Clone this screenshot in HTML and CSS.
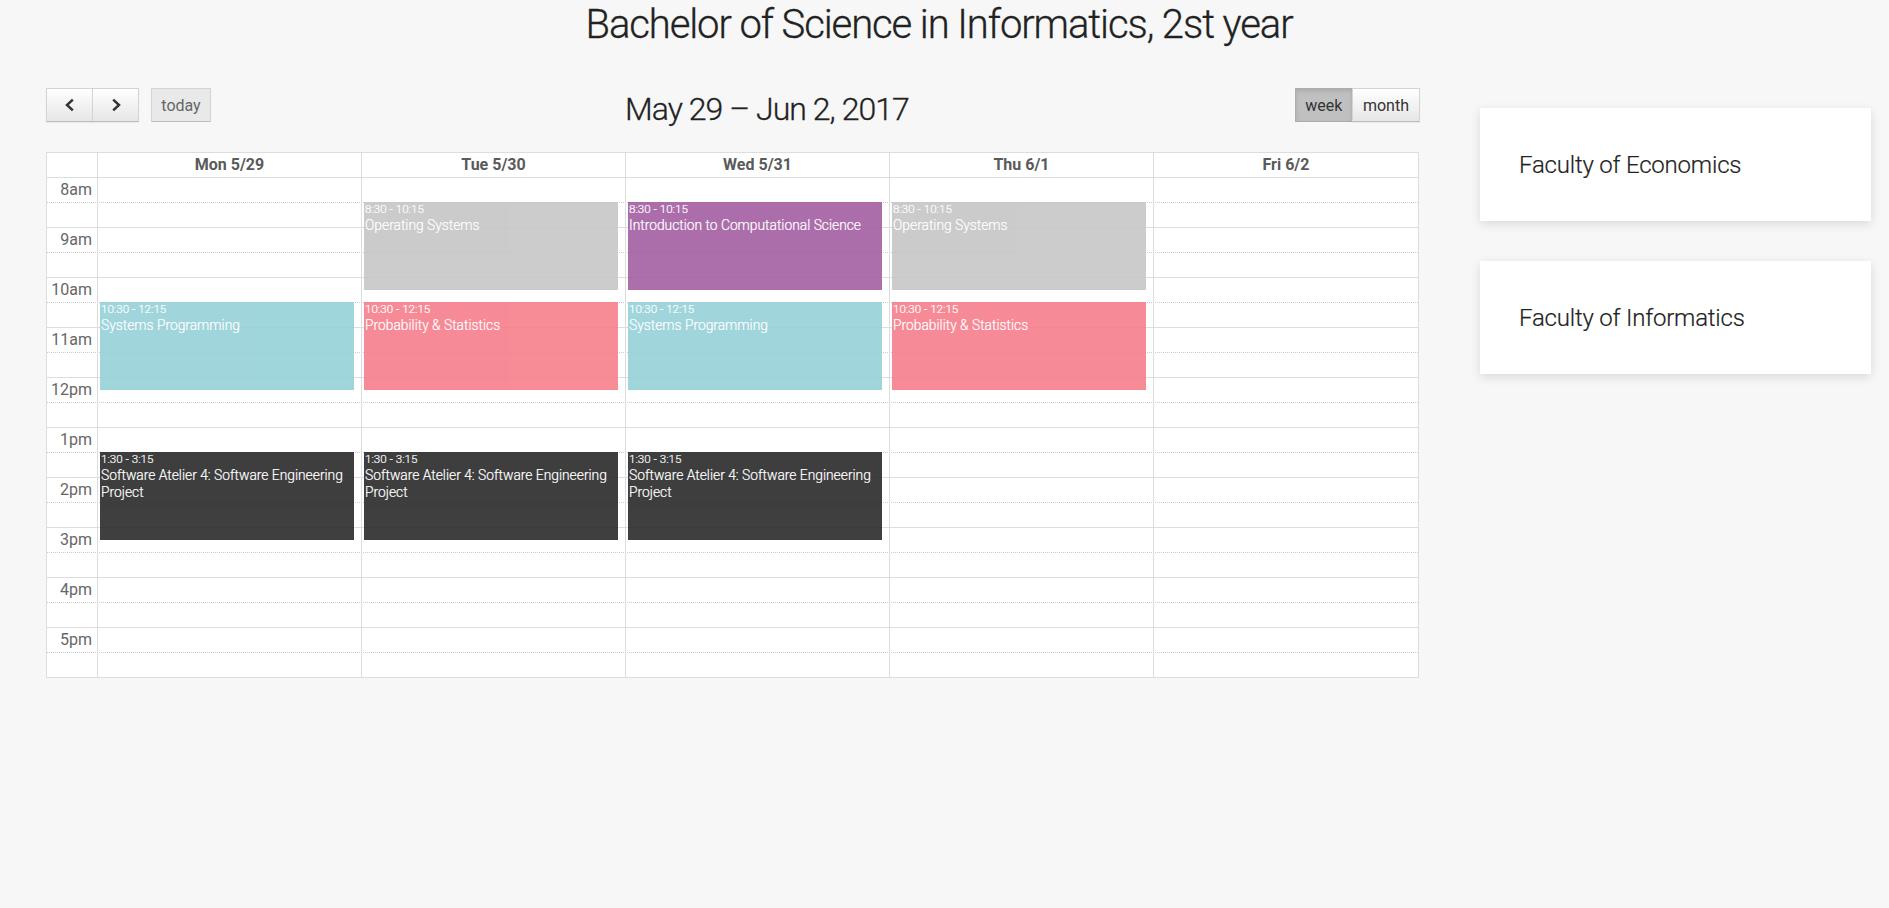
FILE: index.html
```html
<!DOCTYPE html>
<html lang="en">
<head>
    <meta charset="UTF-8">
    <meta name="viewport" content="width=device-width, initial-scale=1.0">
    <title>Bachelor of Science in Informatics, 2st year</title>
    <link rel="stylesheet" href="styles.css">
</head>
<body>
    <h1 class="page-title">Bachelor of Science in Informatics, 2st year</h1>

    <div class="page-row">
        <!-- Calendar -->
        <div class="calendar">
            <div class="toolbar">
                <div class="toolbar-left">
                    <div class="btn-group">
                        <button class="btn btn-icon" aria-label="prev">
                            <svg width="14" height="16" viewBox="0 0 14 16"><path d="M9.8 2.6 4 8l5.8 5.4" fill="none" stroke="#333" stroke-width="2.5"/></svg>
                        </button>
                        <button class="btn btn-icon" aria-label="next">
                            <svg width="14" height="16" viewBox="0 0 14 16"><path d="M4.2 2.6 10 8l-5.8 5.4" fill="none" stroke="#333" stroke-width="2.5"/></svg>
                        </button>
                    </div>
                    <button class="btn btn-disabled">today</button>
                </div>
                <h2 class="range-title">May 29 – Jun 2, 2017</h2>
                <div class="btn-group view-switch">
                    <button class="btn btn-active">week</button>
                    <button class="btn">month</button>
                </div>
            </div>

            <div class="grid">
                <div class="grid-head">
                    <div class="head-axis"></div>
                    <div class="head-day">Mon 5/29</div>
                    <div class="head-day">Tue 5/30</div>
                    <div class="head-day">Wed 5/31</div>
                    <div class="head-day">Thu 6/1</div>
                    <div class="head-day">Fri 6/2</div>
                </div>

                <div class="grid-body">
                    <div class="slots">
                        <div class="slot"><span class="slot-label">8am</span></div>
                        <div class="slot slot-minor"></div>
                        <div class="slot"><span class="slot-label">9am</span></div>
                        <div class="slot slot-minor"></div>
                        <div class="slot"><span class="slot-label">10am</span></div>
                        <div class="slot slot-minor"></div>
                        <div class="slot"><span class="slot-label">11am</span></div>
                        <div class="slot slot-minor"></div>
                        <div class="slot"><span class="slot-label">12pm</span></div>
                        <div class="slot slot-minor"></div>
                        <div class="slot"><span class="slot-label">1pm</span></div>
                        <div class="slot slot-minor"></div>
                        <div class="slot"><span class="slot-label">2pm</span></div>
                        <div class="slot slot-minor"></div>
                        <div class="slot"><span class="slot-label">3pm</span></div>
                        <div class="slot slot-minor"></div>
                        <div class="slot"><span class="slot-label">4pm</span></div>
                        <div class="slot slot-minor"></div>
                        <div class="slot"><span class="slot-label">5pm</span></div>
                        <div class="slot slot-minor"></div>
                    </div>

                    <!-- Events sit on top of the slots -->
                    <div class="days">
                        <div class="day">
                            <div class="event at-1030 teal">
                                <div class="event-time">10:30 - 12:15</div>
                                <div class="event-title">Systems Programming</div>
                            </div>
                            <div class="event at-130 dark">
                                <div class="event-time">1:30 - 3:15</div>
                                <div class="event-title">Software Atelier 4: Software Engineering Project</div>
                            </div>
                        </div>
                        <div class="day">
                            <div class="event at-830 grey">
                                <div class="event-time">8:30 - 10:15</div>
                                <div class="event-title">Operating Systems</div>
                            </div>
                            <div class="event at-1030 pink">
                                <div class="event-time">10:30 - 12:15</div>
                                <div class="event-title">Probability &amp; Statistics</div>
                            </div>
                            <div class="event at-130 dark">
                                <div class="event-time">1:30 - 3:15</div>
                                <div class="event-title">Software Atelier 4: Software Engineering Project</div>
                            </div>
                        </div>
                        <div class="day">
                            <div class="event at-830 purple">
                                <div class="event-time">8:30 - 10:15</div>
                                <div class="event-title">Introduction to Computational Science</div>
                            </div>
                            <div class="event at-1030 teal">
                                <div class="event-time">10:30 - 12:15</div>
                                <div class="event-title">Systems Programming</div>
                            </div>
                            <div class="event at-130 dark">
                                <div class="event-time">1:30 - 3:15</div>
                                <div class="event-title">Software Atelier 4: Software Engineering Project</div>
                            </div>
                        </div>
                        <div class="day">
                            <div class="event at-830 grey">
                                <div class="event-time">8:30 - 10:15</div>
                                <div class="event-title">Operating Systems</div>
                            </div>
                            <div class="event at-1030 pink">
                                <div class="event-time">10:30 - 12:15</div>
                                <div class="event-title">Probability &amp; Statistics</div>
                            </div>
                        </div>
                        <div class="day"></div>
                    </div>
                </div>
            </div>
        </div>

        <!-- Faculty cards -->
        <div class="sidebar">
            <div class="card">Faculty of Economics</div>
            <div class="card">Faculty of Informatics</div>
        </div>
    </div>
</body>
</html>
```

FILE: styles.css
```css
/* Page */
body {
    margin: 0;
    height: 908px;
    overflow: hidden;
    box-sizing: border-box;
    background-color: #f7f7f7;
    font-family: Roboto, "Liberation Sans", sans-serif;
    color: #333;
}

.page-title {
    margin: 0;
    padding-right: 11px;
    text-align: center;
    font-size: 40px;
    font-weight: 300;
    line-height: 50px;
    letter-spacing: -1.1px;
    color: #222;
    -webkit-text-stroke: 0.3px #222;
}

.page-row {
    display: flex;
    align-items: flex-start;
    padding: 38px 18px 0 46px;
    gap: 61px;
}

/* Calendar toolbar */
.calendar {
    width: 1373px;
    flex: none;
}

.toolbar {
    display: flex;
    justify-content: space-between;
    align-items: flex-start;
    height: 64px;
}

.toolbar-left {
    display: flex;
    gap: 12px;
    width: 165px;
}

.range-title {
    margin: 0;
    padding-left: 28px;
    font-size: 32px;
    font-weight: 300;
    line-height: 42px;
    letter-spacing: -0.95px;
    color: #222;
    -webkit-text-stroke: 0.3px #222;
}

.btn-group {
    display: flex;
}

.view-switch {
    margin-right: -1px;
}

.btn {
    height: 34px;
    padding: 0 10px;
    border: 1px solid #d4d4d4;
    border-bottom-color: #bcbcbc;
    background: linear-gradient(#fff, #e6e6e6);
    font-family: inherit;
    font-size: 16px;
    color: #333;
    box-shadow: 0 1px 1px rgba(0, 0, 0, 0.05);
}

.btn-group .btn + .btn {
    margin-left: -1px;
}

.btn-icon {
    width: 47px;
    padding: 0;
    display: flex;
    align-items: center;
    justify-content: center;
}

.btn-disabled {
    width: 60px;
    padding: 0;
    background: #e9e9e9;
    color: #666;
    box-shadow: none;
}

.btn-active {
    background: #c0c0c0;
    border-color: #adadad;
    box-shadow: inset 0 2px 4px rgba(0, 0, 0, 0.12);
    padding: 0 9.5px;
}

/* Grid */
.grid {
    border: 1px solid #ddd;
    background-color: #fff;
    color: #5a5a5a;
}

.grid-head {
    display: grid;
    grid-template-columns: 50px repeat(4, 264px) 1fr;
    height: 24px;
    border-bottom: 1px solid #ddd;
}

.head-day {
    border-left: 1px solid #ddd;
    text-align: center;
    font-size: 16px;
    font-weight: 700;
    line-height: 24px;
}

.grid-body {
    position: relative;
}

.slot {
    box-sizing: border-box;
    height: 25px;
    border-top: 1px solid #ddd;
    font-size: 16px;
    line-height: 23px;
    color: #666;
}

.slot:first-child {
    height: 24px;
    border-top: none;
}

.slot-minor {
    border-top: 1px dotted #ccc;
}

.slot-label {
    display: block;
    width: 45px;
    text-align: right;
}

.days {
    position: absolute;
    top: 0;
    bottom: 0;
    left: 50px;
    right: 0;
    display: grid;
    grid-template-columns: repeat(4, 264px) 1fr;
}

.day {
    position: relative;
    border-left: 1px solid #ddd;
}

/* Events */
.event {
    position: absolute;
    left: 2px;
    right: 7px;
    height: 88px;
    padding: 0 1px;
    box-sizing: border-box;
    color: #fff;
    overflow: hidden;
    opacity: 0.9;
    -webkit-text-stroke: 0.2px #fff;
}

.at-830 { top: 24px; }
.at-1030 { top: 124px; }
.at-130 { top: 274px; }

.event-time {
    font-size: 11.6px;
    font-weight: 300;
    line-height: 14px;
}

.event-title {
    font-size: 13.8px;
    font-weight: 300;
    line-height: 17px;
    margin-top: 1px;
}

.teal { background-color: #95d1d8; }
.grey { background-color: #c6c6c6; }
.pink { background-color: #f67e8b; }
.dark { background-color: #2a2a2a; }
.purple { background-color: #a45fa3; }

/* Sidebar */
.sidebar {
    width: 391px;
    flex: none;
    padding-top: 20px;
    display: flex;
    flex-direction: column;
    gap: 40px;
}

.card {
    height: 113px;
    padding: 0 39px;
    display: flex;
    align-items: center;
    background-color: #fff;
    font-size: 24px;
    font-weight: 300;
    letter-spacing: -0.2px;
    color: #222;
    -webkit-text-stroke: 0.2px #222;
    box-shadow: 0 3px 10px rgba(0, 0, 0, 0.12);
}
```
